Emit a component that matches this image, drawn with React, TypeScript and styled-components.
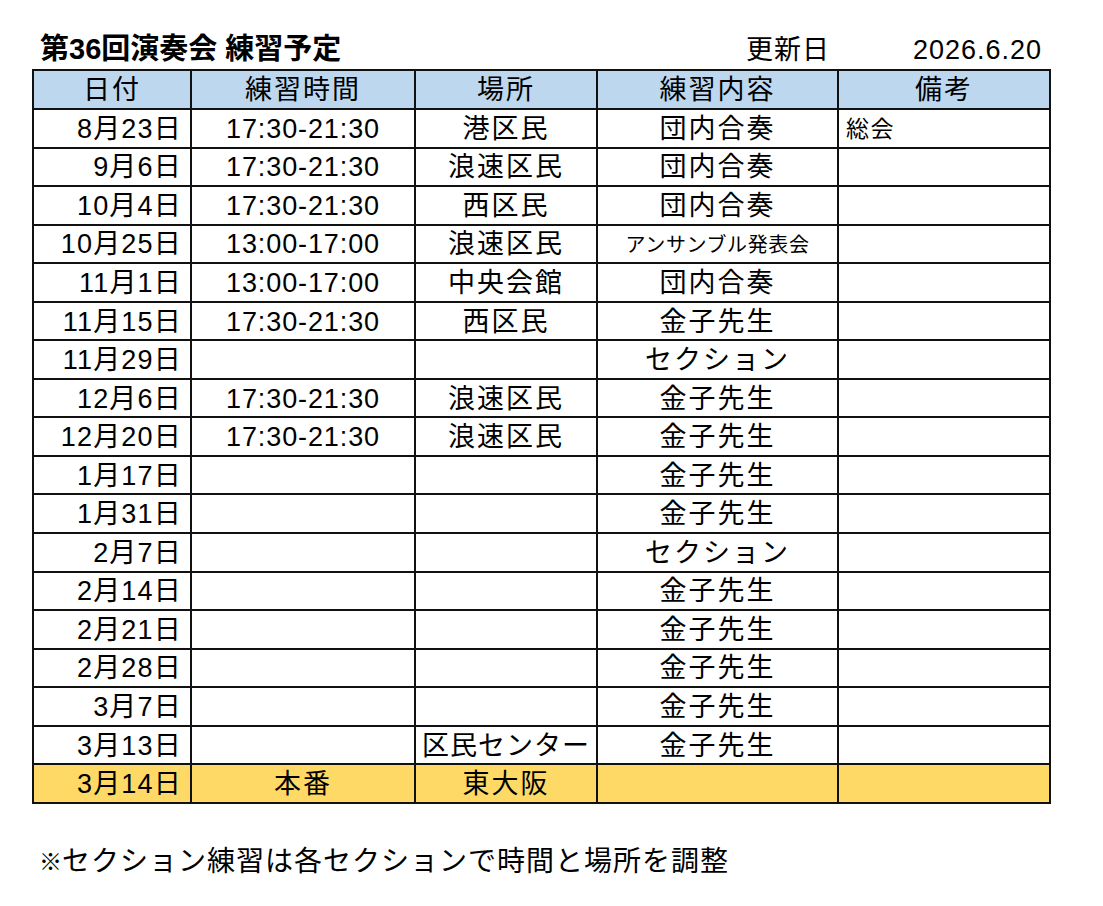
import React from "react";
import styled, { createGlobalStyle, css } from "styled-components";

const GlobalStyle = createGlobalStyle`
  html, body { margin: 0; padding: 0; background: #ffffff; }
  body {
    font-family: "Liberation Sans", "Noto Sans CJK JP", sans-serif;
    color: #000000;
  }
`;

const COLS = "158px 224px 182px 241px 212px";

const Page = styled.div`
  padding: 30px 0 0 32px;
  width: 1103px;
  height: 906px;
  box-sizing: border-box;
`;

const TitleRow = styled.div`
  display: grid;
  grid-template-columns: 2px ${COLS};
  height: 39px;
  align-items: center;
`;

const Title = styled.div`
  grid-column: 2 / span 3;
  padding-left: 6px;
  font-size: 29px;
  font-weight: 700;
  line-height: 1;
  white-space: nowrap;
`;

const Meta = styled.div`
  font-size: 27px;
  line-height: 1;
  letter-spacing: 1px;
  text-align: right;
  padding-right: 9px;
  padding-top: 2px;
  white-space: nowrap;
`;

const Sheet = styled.div`
  display: grid;
  grid-template-columns: ${COLS};
  grid-template-rows: 39px;
  grid-auto-rows: 38.55px;
  width: max-content;
  border-top: 2px solid #111111;
  border-left: 2px solid #111111;
`;

type Align = "left" | "center" | "right";

const Cell = styled.div<{ $align?: Align; $fill?: string; $size?: number; $spacing?: number }>`
  box-sizing: border-box;
  border-right: 2px solid #111111;
  border-bottom: 2px solid #111111;
  background: ${(p) => p.$fill ?? "#ffffff"};
  display: flex;
  align-items: center;
  justify-content: ${(p) =>
    p.$align === "left" ? "flex-start" : p.$align === "right" ? "flex-end" : "center"};
  padding: 2px 4px 0;
  font-size: ${(p) => p.$size ?? 27}px;
  letter-spacing: ${(p) => p.$spacing ?? 2}px;
  line-height: 1;
  white-space: nowrap;
  overflow: visible;
  ${(p) =>
    p.$align === "right" &&
    css`
      padding-right: 8px;
    `}
  ${(p) =>
    p.$align === "left" &&
    css`
      padding-left: 7px;
    `}
`;

const HeadCell = styled(Cell)`
  background: #bdd7ee;
`;

const Note = styled.div`
  margin-top: 39px;
  height: 39px;
  display: flex;
  align-items: center;
  padding-left: 7px;
  font-size: 28px;
  letter-spacing: 1px;
  line-height: 1;
  white-space: nowrap;
`;

const Mark = styled.span`
  font-size: 23px;
  letter-spacing: 0;
`;

type Row = {
  date: string;
  time?: string;
  place?: string;
  content?: string;
  small?: boolean;
  remark?: string;
  highlight?: boolean;
};

const rows: Row[] = [
  { date: "8月23日", time: "17:30-21:30", place: "港区民", content: "団内合奏", remark: "総会" },
  { date: "9月6日", time: "17:30-21:30", place: "浪速区民", content: "団内合奏" },
  { date: "10月4日", time: "17:30-21:30", place: "西区民", content: "団内合奏" },
  { date: "10月25日", time: "13:00-17:00", place: "浪速区民", content: "アンサンブル発表会", small: true },
  { date: "11月1日", time: "13:00-17:00", place: "中央会館", content: "団内合奏" },
  { date: "11月15日", time: "17:30-21:30", place: "西区民", content: "金子先生" },
  { date: "11月29日", content: "セクション" },
  { date: "12月6日", time: "17:30-21:30", place: "浪速区民", content: "金子先生" },
  { date: "12月20日", time: "17:30-21:30", place: "浪速区民", content: "金子先生" },
  { date: "1月17日", content: "金子先生" },
  { date: "1月31日", content: "金子先生" },
  { date: "2月7日", content: "セクション" },
  { date: "2月14日", content: "金子先生" },
  { date: "2月21日", content: "金子先生" },
  { date: "2月28日", content: "金子先生" },
  { date: "3月7日", content: "金子先生" },
  { date: "3月13日", place: "区民センター", content: "金子先生" },
  { date: "3月14日", time: "本番", place: "東大阪", highlight: true },
];

const headers = ["日付", "練習時間", "場所", "練習内容", "備考"];

export default function App() {
  return (
    <Page>
      <GlobalStyle />
      <TitleRow>
        <span />
        <Title>第36回演奏会 練習予定</Title>
        <Meta>更新日</Meta>
        <Meta>2026.6.20</Meta>
      </TitleRow>
      <Sheet>
        {headers.map((h) => (
          <HeadCell key={h}>{h}</HeadCell>
        ))}
        {rows.map((r) => {
          const fill = r.highlight ? "#ffd966" : undefined;
          return (
            <React.Fragment key={r.date}>
              <Cell $align="right" $fill={fill} $spacing={1.2}>{r.date}</Cell>
              <Cell $fill={fill} $spacing={r.highlight ? 2 : 0.9}>{r.time ?? ""}</Cell>
              <Cell $fill={fill} $spacing={r.place === "区民センター" ? 1 : 2}>{r.place ?? ""}</Cell>
              <Cell $fill={fill} $size={r.small ? 20 : 27} $spacing={r.small ? 0.6 : 2}>
                {r.content ?? ""}
              </Cell>
              <Cell $align="left" $fill={fill} $size={23} $spacing={1.5}>{r.remark ?? ""}</Cell>
            </React.Fragment>
          );
        })}
      </Sheet>
      <Note>
        <Mark>※</Mark>セクション練習は各セクションで時間と場所を調整
      </Note>
    </Page>
  );
}
